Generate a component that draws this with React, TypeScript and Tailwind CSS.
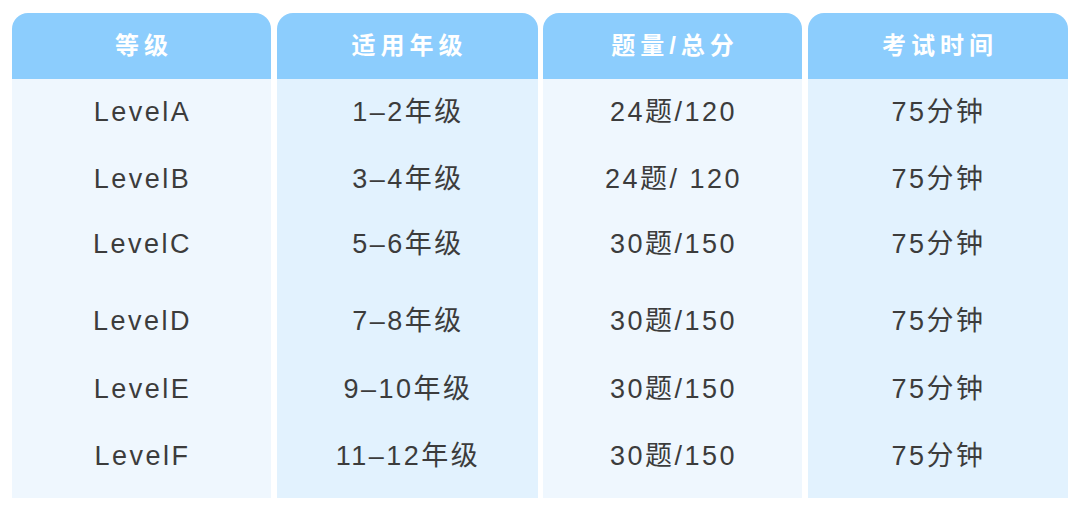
import React from "react";

const cols = [
  { title: "等级", cells: ["LevelA", "LevelB", "LevelC", "LevelD", "LevelE", "LevelF"], light: true, w: "w-[259px]" },
  { title: "适用年级", cells: ["1–2年级", "3–4年级", "5–6年级", "7–8年级", "9–10年级", "11–12年级"], light: false, w: "w-[261px]" },
  { title: "题量/总分", cells: ["24题/120", "24题/ 120", "30题/150", "30题/150", "30题/150", "30题/150"], light: true, w: "w-[259px]" },
  { title: "考试时间", cells: ["75分钟", "75分钟", "75分钟", "75分钟", "75分钟", "75分钟"], light: false, w: "w-[260px]" },
];

const margins = ["mt-[13px]", "mt-[27px]", "mt-[25px]", "mt-[37px]", "mt-[28px]", "mt-[27px]"];

export default function App() {
  return (
    <div
      className="w-[1080px] h-[514px] bg-white flex pl-[12px] pt-[13px] gap-[5.5px]"
      style={{ fontFamily: '"Liberation Sans", Arial, "Noto Sans CJK SC", sans-serif' }}
    >
      {cols.map((c, i) => (
        <div key={i} className={`${c.w} flex flex-col`}>
          <div className="h-[66px] rounded-t-[16px] bg-[#8ccdfd] flex items-center justify-center text-white text-[24px] font-bold tracking-[5px] pl-[5px]">
            {c.title}
          </div>
          <div className={`h-[419px] flex flex-col ${c.light ? "bg-[#eff7fe]" : "bg-[#e2f2fe]"}`}>
            {c.cells.map((t, j) => (
              <div
                key={j}
                className={`${margins[j]} h-[40px] flex items-center justify-center text-[27px] text-[#3c3c3c] tracking-[2.5px] pl-[2px]`}
              >
                {t}
              </div>
            ))}
          </div>
        </div>
      ))}
    </div>
  );
}
